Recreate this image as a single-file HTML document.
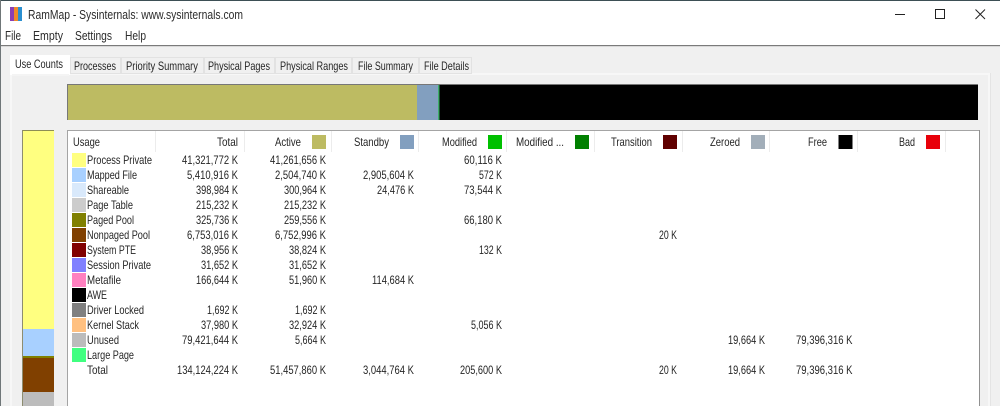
<!DOCTYPE html>
<html><head><meta charset="utf-8"><style>
html,body{margin:0;padding:0;width:1000px;height:406px;overflow:hidden;background:#f0f0f0}
svg{display:block;filter:blur(.3px)}
text{font-family:"Liberation Sans",sans-serif;font-size:12px;fill:#262626}
.t{font-size:13px;fill:#2c2c2c}
</style></head><body>
<svg width="1000" height="406" viewBox="0 0 1000 406" xmlns="http://www.w3.org/2000/svg">
<rect width="1000" height="406" fill="#f0f0f0"/>
<rect width="1000" height="45" fill="#fff"/>
<rect width="1000" height="1" fill="#3d4f55"/>
<rect y="45" width="1000" height="1" fill="#7a7a7a"/>
<rect y="46" width="1000" height="1" fill="#d8d8d8"/>
<rect x="0" y="0" width="1" height="406" fill="#6f7678"/>
<!-- icon -->
<rect x="10" y="7" width="4" height="14" fill="#8a3fb5"/><rect x="14" y="7" width="4" height="14" fill="#ee8a2a"/><rect x="18" y="7" width="4" height="14" fill="#2a8fd0"/>
<text class="t" x="28" y="19" textLength="215" lengthAdjust="spacingAndGlyphs">RamMap - Sysinternals: www.sysinternals.com</text>
<text class="t" x="5" y="40" textLength="16" lengthAdjust="spacingAndGlyphs">File</text>
<text class="t" x="33" y="40" textLength="30" lengthAdjust="spacingAndGlyphs">Empty</text>
<text class="t" x="75" y="40" textLength="37" lengthAdjust="spacingAndGlyphs">Settings</text>
<text class="t" x="125" y="40" textLength="21" lengthAdjust="spacingAndGlyphs">Help</text>
<!-- window controls -->
<rect x="895" y="14" width="10" height="1" fill="#222"/>
<rect x="935.5" y="9.5" width="9" height="9" fill="none" stroke="#222"/>
<path d="M975.5 9.5L985 19M985 9.5L975.5 19" stroke="#222" fill="none"/>
<!-- panel -->
<rect x="10" y="73" width="981" height="333" fill="#f7f7f7"/>
<rect x="12" y="75" width="976" height="331" fill="#f0f0f0"/>
<rect x="990" y="73" width="1" height="333" fill="#e4e4e4"/>
<!-- tabs -->
<g fill="#f0f0f0" stroke="#e2e2e2">
<rect x="70.5" y="57.5" width="50" height="16"/><rect x="121.5" y="57.5" width="82" height="16"/><rect x="204.5" y="57.5" width="70" height="16"/><rect x="275.5" y="57.5" width="76" height="16"/><rect x="352.5" y="57.5" width="66" height="16"/><rect x="419.5" y="57.5" width="52" height="16"/>
</g>
<rect x="10" y="55" width="60" height="20" fill="#fff"/>
<rect x="12" y="74" width="57" height="2" fill="#f4f4f4"/>
<text x="15" y="68" textLength="48" lengthAdjust="spacingAndGlyphs">Use Counts</text>
<text x="74" y="70" textLength="42" lengthAdjust="spacingAndGlyphs">Processes</text>
<text x="126" y="70" textLength="72" lengthAdjust="spacingAndGlyphs">Priority Summary</text>
<text x="208" y="70" textLength="62" lengthAdjust="spacingAndGlyphs">Physical Pages</text>
<text x="280" y="70" textLength="68" lengthAdjust="spacingAndGlyphs">Physical Ranges</text>
<text x="358" y="70" textLength="55" lengthAdjust="spacingAndGlyphs">File Summary</text>
<text x="424" y="70" textLength="45" lengthAdjust="spacingAndGlyphs">File Details</text>
<!-- top bar -->
<rect x="67" y="84" width="911" height="36" fill="#000"/>
<rect x="67" y="84" width="350" height="36" fill="#bdbb62"/>
<rect x="417" y="84" width="21" height="36" fill="#829fbf"/>
<rect x="438" y="84" width="1.5" height="36" fill="#3fae6a"/>
<rect x="67" y="84" width="911" height="1" fill="#777"/>
<rect x="67" y="84" width="1" height="36" fill="#777"/>
<!-- left bar -->
<rect x="23" y="130" width="31" height="199" fill="#ffff80"/>
<rect x="23" y="329" width="31" height="27" fill="#a8d0ff"/>
<rect x="23" y="356" width="31" height="2" fill="#808000"/>
<rect x="23" y="358" width="31" height="34" fill="#804000"/>
<rect x="23" y="392" width="31" height="14" fill="#bcbcbc"/>
<rect x="23" y="130" width="31" height="1" fill="#8d8d55"/>
<rect x="22" y="130" width="1" height="276" fill="#8d8d70"/>
<!-- list -->
<rect x="67" y="130" width="913" height="276" fill="#fff"/>
<rect x="67" y="130" width="913" height="1" fill="#a4a4a4"/>
<rect x="67" y="130" width="1" height="276" fill="#a4a4a4"/>
<rect x="979" y="130" width="1" height="276" fill="#909090"/>
<g fill="#ececec">
<rect x="155" y="131" width="1" height="21"/><rect x="244" y="131" width="1" height="21"/><rect x="331" y="131" width="1" height="21"/><rect x="418" y="131" width="1" height="21"/><rect x="506" y="131" width="1" height="21"/><rect x="594" y="131" width="1" height="21"/><rect x="682" y="131" width="1" height="21"/><rect x="769" y="131" width="1" height="21"/><rect x="857" y="131" width="1" height="21"/><rect x="945" y="131" width="1" height="21"/>
</g>
<!-- header -->
<text x="73" y="146" textLength="27" lengthAdjust="spacingAndGlyphs">Usage</text>
<text x="217" y="146" textLength="21" lengthAdjust="spacingAndGlyphs">Total</text>
<text x="275" y="146" textLength="26" lengthAdjust="spacingAndGlyphs">Active</text>
<text x="354" y="146" textLength="35" lengthAdjust="spacingAndGlyphs">Standby</text>
<text x="442" y="146" textLength="35" lengthAdjust="spacingAndGlyphs">Modified</text>
<text x="516" y="146" textLength="48" lengthAdjust="spacingAndGlyphs">Modified ...</text>
<text x="611" y="146" textLength="41" lengthAdjust="spacingAndGlyphs">Transition</text>
<text x="710" y="146" textLength="30" lengthAdjust="spacingAndGlyphs">Zeroed</text>
<text x="808" y="146" textLength="19" lengthAdjust="spacingAndGlyphs">Free</text>
<text x="899" y="146" textLength="16" lengthAdjust="spacingAndGlyphs">Bad</text>
<rect x="312" y="135" width="14" height="14" fill="#bdbb62"/>
<rect x="400" y="135" width="14" height="14" fill="#829fbf"/>
<rect x="488" y="135" width="14" height="14" fill="#00c000"/>
<rect x="575" y="135" width="14" height="14" fill="#008000"/>
<rect x="663" y="135" width="14" height="14" fill="#600000"/>
<rect x="751" y="135" width="14" height="14" fill="#a2aeb9"/>
<rect x="838.5" y="135" width="14" height="14" fill="#000"/>
<rect x="926" y="135" width="14" height="14" fill="#e8000a"/>
<!-- swatches -->
<rect x="72" y="153" width="14" height="14" fill="#ffff80"/>
<rect x="72" y="168" width="14" height="14" fill="#a8d0ff"/>
<rect x="72" y="183" width="14" height="14" fill="#d9e9fb"/>
<rect x="72" y="198" width="14" height="14" fill="#cccccc"/>
<rect x="72" y="213" width="14" height="14" fill="#808000"/>
<rect x="72" y="228" width="14" height="14" fill="#804000"/>
<rect x="72" y="243" width="14" height="14" fill="#800000"/>
<rect x="72" y="258" width="14" height="14" fill="#8080ff"/>
<rect x="72" y="273" width="14" height="14" fill="#ff80c0"/>
<rect x="72" y="288" width="14" height="14" fill="#000"/>
<rect x="72" y="303" width="14" height="14" fill="#808080"/>
<rect x="72" y="318" width="14" height="14" fill="#ffc080"/>
<rect x="72" y="333" width="14" height="14" fill="#bcbcbc"/>
<rect x="72" y="348" width="14" height="14" fill="#40ff80"/>
<!-- labels -->
<text x="87" y="164" textLength="65" lengthAdjust="spacingAndGlyphs">Process Private</text>
<text x="87" y="179" textLength="50" lengthAdjust="spacingAndGlyphs">Mapped File</text>
<text x="87" y="194" textLength="42" lengthAdjust="spacingAndGlyphs">Shareable</text>
<text x="87" y="209" textLength="46" lengthAdjust="spacingAndGlyphs">Page Table</text>
<text x="87" y="224" textLength="47" lengthAdjust="spacingAndGlyphs">Paged Pool</text>
<text x="87" y="239" textLength="63" lengthAdjust="spacingAndGlyphs">Nonpaged Pool</text>
<text x="87" y="254" textLength="49" lengthAdjust="spacingAndGlyphs">System PTE</text>
<text x="87" y="269" textLength="64" lengthAdjust="spacingAndGlyphs">Session Private</text>
<text x="87" y="284" textLength="34" lengthAdjust="spacingAndGlyphs">Metafile</text>
<text x="87" y="299" textLength="20" lengthAdjust="spacingAndGlyphs">AWE</text>
<text x="87" y="314" textLength="57" lengthAdjust="spacingAndGlyphs">Driver Locked</text>
<text x="87" y="329" textLength="52" lengthAdjust="spacingAndGlyphs">Kernel Stack</text>
<text x="87" y="344" textLength="32" lengthAdjust="spacingAndGlyphs">Unused</text>
<text x="87" y="359" textLength="47" lengthAdjust="spacingAndGlyphs">Large Page</text>
<text x="87" y="374" textLength="21" lengthAdjust="spacingAndGlyphs">Total</text>
<!-- Total col -->
<text x="182" y="164" textLength="56" lengthAdjust="spacingAndGlyphs">41,321,772 K</text>
<text x="187" y="179" textLength="51" lengthAdjust="spacingAndGlyphs">5,410,916 K</text>
<text x="196" y="194" textLength="42" lengthAdjust="spacingAndGlyphs">398,984 K</text>
<text x="196" y="209" textLength="42" lengthAdjust="spacingAndGlyphs">215,232 K</text>
<text x="196" y="224" textLength="42" lengthAdjust="spacingAndGlyphs">325,736 K</text>
<text x="187" y="239" textLength="51" lengthAdjust="spacingAndGlyphs">6,753,016 K</text>
<text x="201" y="254" textLength="37" lengthAdjust="spacingAndGlyphs">38,956 K</text>
<text x="201" y="269" textLength="37" lengthAdjust="spacingAndGlyphs">31,652 K</text>
<text x="196" y="284" textLength="42" lengthAdjust="spacingAndGlyphs">166,644 K</text>
<text x="207" y="314" textLength="31" lengthAdjust="spacingAndGlyphs">1,692 K</text>
<text x="201" y="329" textLength="37" lengthAdjust="spacingAndGlyphs">37,980 K</text>
<text x="182" y="344" textLength="56" lengthAdjust="spacingAndGlyphs">79,421,644 K</text>
<text x="177" y="374" textLength="61" lengthAdjust="spacingAndGlyphs">134,124,224 K</text>
<!-- Active col -->
<text x="270" y="164" textLength="56" lengthAdjust="spacingAndGlyphs">41,261,656 K</text>
<text x="275" y="179" textLength="51" lengthAdjust="spacingAndGlyphs">2,504,740 K</text>
<text x="284" y="194" textLength="42" lengthAdjust="spacingAndGlyphs">300,964 K</text>
<text x="284" y="209" textLength="42" lengthAdjust="spacingAndGlyphs">215,232 K</text>
<text x="284" y="224" textLength="42" lengthAdjust="spacingAndGlyphs">259,556 K</text>
<text x="275" y="239" textLength="51" lengthAdjust="spacingAndGlyphs">6,752,996 K</text>
<text x="289" y="254" textLength="37" lengthAdjust="spacingAndGlyphs">38,824 K</text>
<text x="289" y="269" textLength="37" lengthAdjust="spacingAndGlyphs">31,652 K</text>
<text x="289" y="284" textLength="37" lengthAdjust="spacingAndGlyphs">51,960 K</text>
<text x="295" y="314" textLength="31" lengthAdjust="spacingAndGlyphs">1,692 K</text>
<text x="289" y="329" textLength="37" lengthAdjust="spacingAndGlyphs">32,924 K</text>
<text x="295" y="344" textLength="31" lengthAdjust="spacingAndGlyphs">5,664 K</text>
<text x="270" y="374" textLength="56" lengthAdjust="spacingAndGlyphs">51,457,860 K</text>
<!-- Standby col -->
<text x="363" y="179" textLength="51" lengthAdjust="spacingAndGlyphs">2,905,604 K</text>
<text x="377" y="194" textLength="37" lengthAdjust="spacingAndGlyphs">24,476 K</text>
<text x="372" y="284" textLength="42" lengthAdjust="spacingAndGlyphs">114,684 K</text>
<text x="363" y="374" textLength="51" lengthAdjust="spacingAndGlyphs">3,044,764 K</text>
<!-- Modified col -->
<text x="464" y="164" textLength="38" lengthAdjust="spacingAndGlyphs">60,116 K</text>
<text x="479" y="179" textLength="23" lengthAdjust="spacingAndGlyphs">572 K</text>
<text x="464" y="194" textLength="38" lengthAdjust="spacingAndGlyphs">73,544 K</text>
<text x="464" y="224" textLength="38" lengthAdjust="spacingAndGlyphs">66,180 K</text>
<text x="479" y="254" textLength="23" lengthAdjust="spacingAndGlyphs">132 K</text>
<text x="471" y="329" textLength="31" lengthAdjust="spacingAndGlyphs">5,056 K</text>
<text x="460" y="374" textLength="42" lengthAdjust="spacingAndGlyphs">205,600 K</text>
<!-- Transition -->
<text x="659" y="239" textLength="18" lengthAdjust="spacingAndGlyphs">20 K</text>
<text x="659" y="374" textLength="18" lengthAdjust="spacingAndGlyphs">20 K</text>
<!-- Zeroed -->
<text x="728" y="344" textLength="37" lengthAdjust="spacingAndGlyphs">19,664 K</text>
<text x="728" y="374" textLength="37" lengthAdjust="spacingAndGlyphs">19,664 K</text>
<!-- Free -->
<text x="796" y="344" textLength="56.5" lengthAdjust="spacingAndGlyphs">79,396,316 K</text>
<text x="796" y="374" textLength="56.5" lengthAdjust="spacingAndGlyphs">79,396,316 K</text>
</svg>
</body></html>
